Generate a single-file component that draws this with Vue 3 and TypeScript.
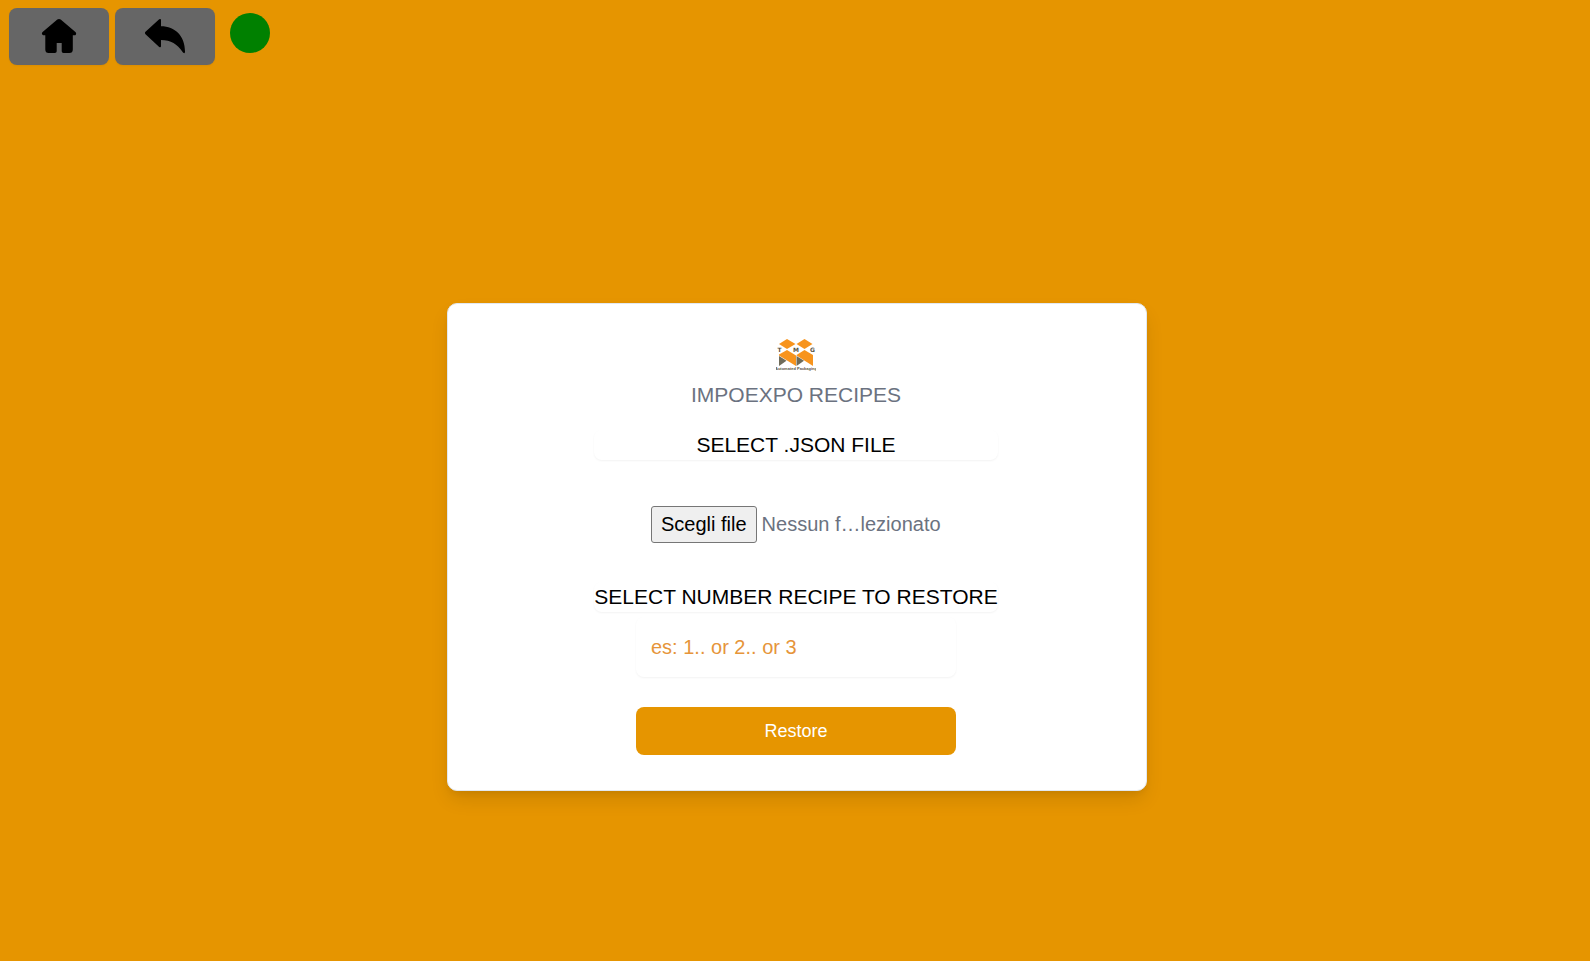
<script setup lang="ts">
import { computed, ref } from 'vue'

const fileName = ref('')
const recipeNumber = ref('')
const connected = ref(true)

const fileStatus = computed(() => fileName.value || 'Nessun f…lezionato')

function onFileChange(event: Event): void {
  const input = event.target as HTMLInputElement
  fileName.value = input.files?.[0]?.name ?? ''
}
</script>

<template>
  <div class="page">
    <nav class="toolbar">
      <button class="nav-button" type="button" aria-label="Home">
        <svg width="36" height="36" viewBox="0 0 36 36" aria-hidden="true">
          <path
            d="M16.3 1.6Q18 .2 19.7 1.6L34.4 14.1Q36 15.9 34.3 17.3H31.8V31.5Q31.8 35 28.3 35H22.5Q20.7 35 20.7 33.2V25H15.7V33.2Q15.7 35 13.9 35H7.7Q4.3 35 4.3 31.5V17.3H2.2Q-.1 15.9 1.6 14.1Z"
          />
        </svg>
      </button>
      <button class="nav-button" type="button" aria-label="Back">
        <svg width="42" height="36" viewBox="0 0 42 36" aria-hidden="true">
          <path
            d="M15.2 1.3Q17 .2 17 2.2V8.2C31 8.2 41 18 41 33.5Q41 36.5 38.8 34.3C33 25.5 27 22.4 17 22V28Q17 30 15.2 28.9L1.5 16.2Q.4 15 1.5 13.8Z"
          />
        </svg>
      </button>
      <span class="status" :class="{ online: connected }" role="status" aria-label="Connection"></span>
    </nav>

    <main class="content">
      <form class="card" @submit.prevent>
        <svg class="logo" width="40" height="40" viewBox="0 0 40 40" role="img" aria-label="TMG Automated Packaging">
          <g fill="#f7941d">
            <path d="M3 8L11 3L19.5 8L11 13Z" />
            <path d="M20.5 8L28.5 3L36.5 8L28.5 13Z" />
            <path d="M3 19.5V18.5L11 14L20 19.5V30Z" />
            <path d="M20.5 19.5V19L28.5 14L37 19V30Z" />
          </g>
          <g fill="#6f6c5b">
            <path d="M3 20L10.5 24.8L3 30Z" />
            <path d="M20.5 20L28 24.8L20.5 30Z" />
          </g>
          <g class="wordmark" text-anchor="middle">
            <text x="3.5" y="16">T</text>
            <text x="20" y="16">M</text>
            <text x="36.5" y="16">G</text>
          </g>
          <text x="20" y="34" text-anchor="middle" class="tagline">Automated Packaging</text>
        </svg>

        <h1 class="title">IMPOEXPO RECIPES</h1>

        <label class="caption" for="recipe-file">SELECT .JSON FILE</label>
        <label class="file-field">
          <input id="recipe-file" class="file-input" type="file" accept=".json" @change="onFileChange" />
          <span class="file-button">Scegli file</span>
          <span class="file-name">{{ fileStatus }}</span>
        </label>

        <label class="caption" for="recipe-number">SELECT NUMBER RECIPE TO RESTORE</label>
        <input
          id="recipe-number"
          v-model="recipeNumber"
          class="number-input"
          type="text"
          placeholder="es: 1.. or 2.. or 3"
        />

        <button class="restore" type="submit">Restore</button>
      </form>
    </main>
  </div>
</template>

<style>
body {
  margin: 0;
  background: #e69500;
}
</style>

<style scoped>
.page {
  box-sizing: border-box;
  display: flex;
  flex-direction: column;
  min-height: 100vh;
  padding: 8px 5px 0 9px;
  background: #e69500;
  font-family: "Liberation Sans", Arial, sans-serif;
  font-size: 20px;
  line-height: 30px;
  color: #6b7280;
}

.toolbar {
  display: flex;
  align-items: flex-start;
  gap: 6px;
}

.nav-button {
  box-sizing: border-box;
  display: flex;
  align-items: center;
  justify-content: center;
  width: 100px;
  height: 57px;
  padding: 0 0 2px;
  border: 0;
  border-radius: 8px;
  background: #666;
  color: #000;
  box-shadow: 0 1px 2px rgba(0, 0, 0, 0.05);
  cursor: pointer;
}

.nav-button svg {
  fill: currentColor;
}

.status {
  width: 40px;
  height: 40px;
  margin: 5px 0 0 9px;
  border-radius: 50%;
  background: #b91c1c;
}

.status.online {
  background: #008000;
}

.content {
  flex: 1;
  display: flex;
  align-items: center;
  justify-content: center;
  padding-top: 68px;
}

.card {
  box-sizing: border-box;
  display: flex;
  flex-direction: column;
  align-items: center;
  width: 100%;
  max-width: 700px;
  padding: 32px 36px 35px 34px;
  border: 1px solid #e2e8f0;
  border-radius: 10px;
  background: #fff;
  box-shadow: 0 10px 20px -3px rgba(0, 0, 0, 0.12), 0 4px 6px -2px rgba(0, 0, 0, 0.06);
}

.wordmark {
  font-family: "DejaVu Sans", sans-serif;
  font-size: 6px;
  font-weight: 700;
  fill: #57533f;
}

.tagline {
  font-family: "Liberation Sans", Arial, sans-serif;
  font-size: 4px;
  font-weight: 700;
  fill: #57533f;
}

.title {
  margin: 4px 0 20px;
  font-size: 21px;
  font-weight: 400;
  line-height: 30px;
}

.caption {
  width: 100%;
  max-width: 404px;
  border-radius: 8px;
  font-size: 21px;
  color: #000;
  text-align: center;
  box-shadow: 0 1px 2px rgba(0, 0, 0, 0.05);
}

.file-field {
  box-sizing: border-box;
  position: relative;
  display: flex;
  align-items: center;
  gap: 5px;
  width: 100%;
  max-width: 320px;
  height: 60px;
  margin: 34px 0 28px;
  padding: 0 0 0 15px;
  cursor: pointer;
}

.file-input {
  position: absolute;
  inset: 0;
  width: 100%;
  opacity: 0;
  cursor: pointer;
}

.file-button {
  padding: 2px 9px 3px;
  border: 1px solid #767676;
  border-radius: 3px;
  background: #efefef;
  color: #000;
  white-space: nowrap;
}

.file-name {
  overflow: hidden;
  text-overflow: ellipsis;
  white-space: nowrap;
}

.number-input {
  box-sizing: border-box;
  width: 100%;
  max-width: 320px;
  height: 60px;
  margin: 5px 0 30px;
  padding: 0 15px;
  border: 0;
  border-radius: 8px;
  background: #fff;
  color: #e69500;
  font: inherit;
  box-shadow: 0 1px 2px rgba(0, 0, 0, 0.05);
}

.number-input::placeholder {
  color: #e6953a;
  opacity: 1;
}

.restore {
  width: 100%;
  max-width: 320px;
  height: 48px;
  padding: 0;
  border: 0;
  border-radius: 8px;
  background: #e69500;
  color: #fff;
  font-family: inherit;
  font-size: 18px;
  cursor: pointer;
}
</style>
